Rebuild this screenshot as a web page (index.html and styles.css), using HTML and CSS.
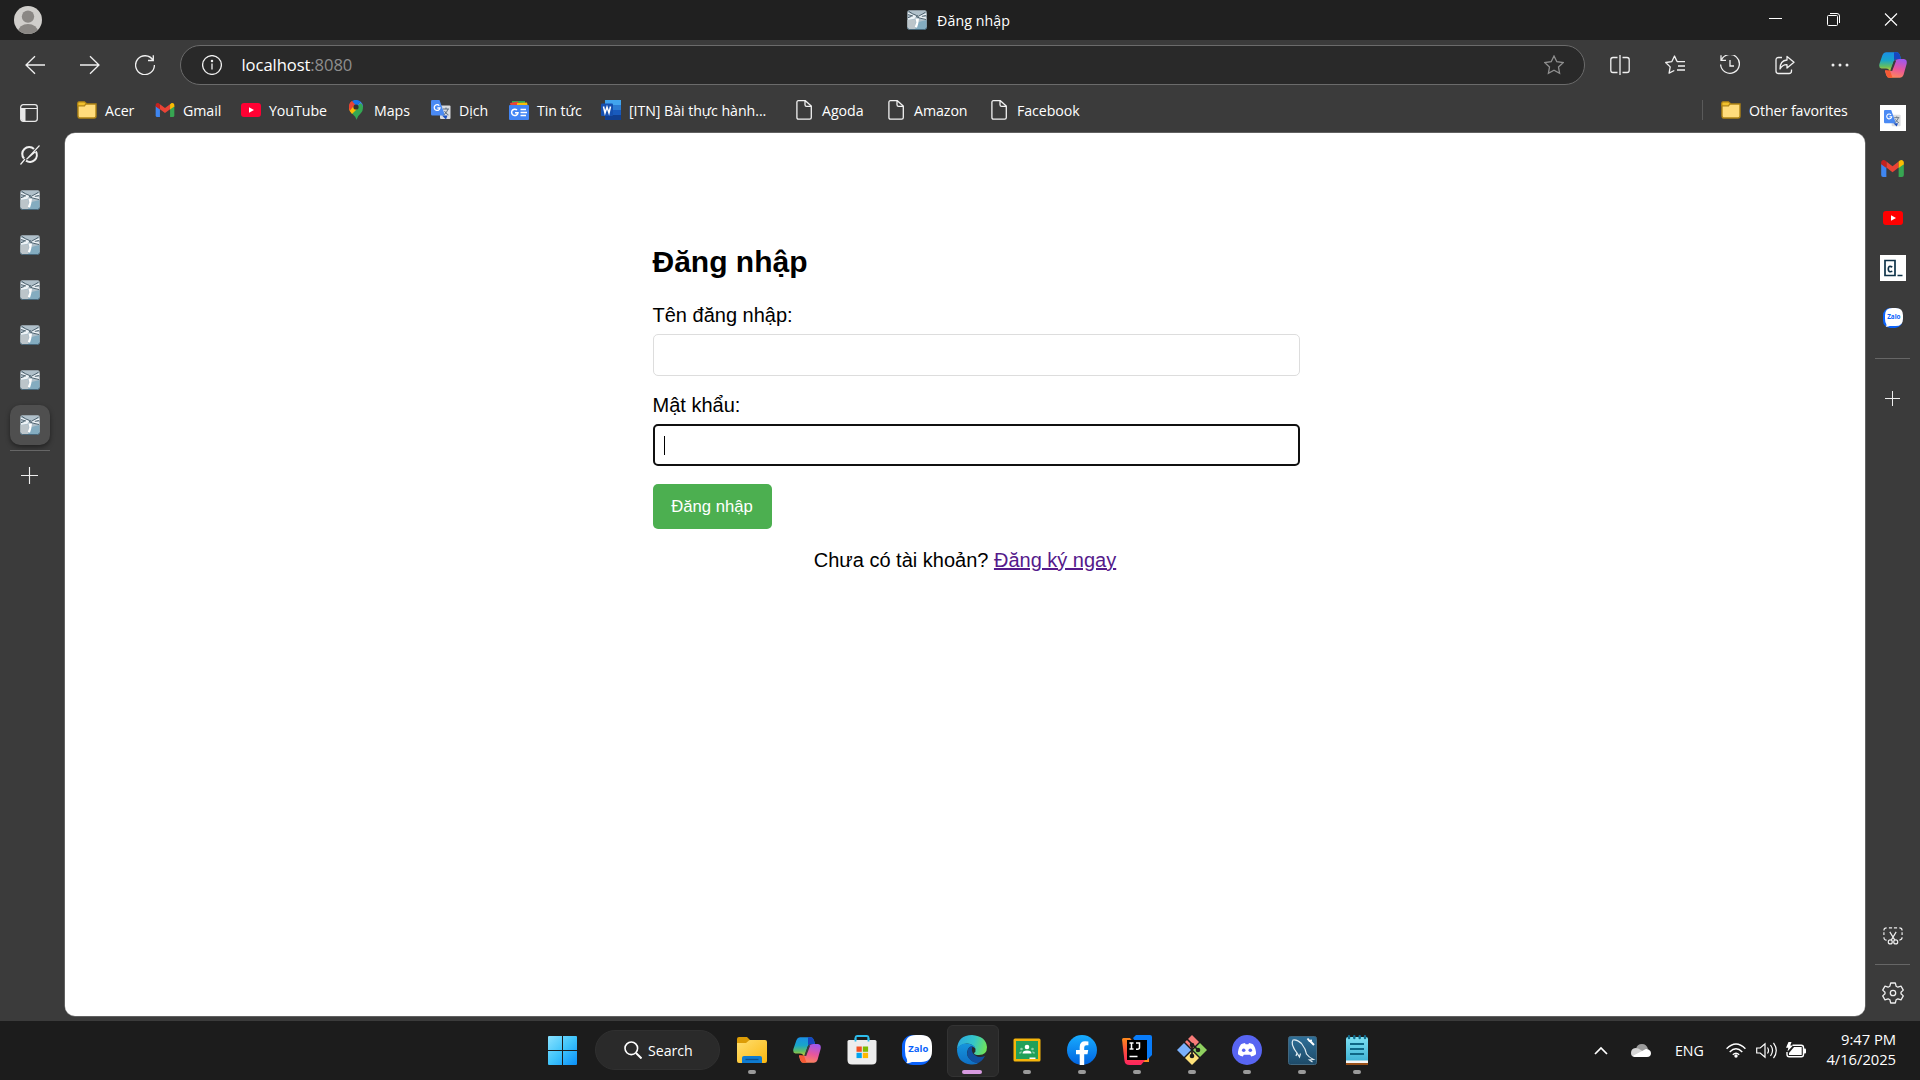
FILE: index.html
```html
<!DOCTYPE html>
<html lang="vi">
<head>
<meta charset="utf-8">
<title>Đăng nhập</title>
<link rel="stylesheet" href="styles.css">
</head>
<body>
<svg class="defs" width="0" height="0">
  <defs>
    <linearGradient id="cp1" x1="0" y1="0" x2="0" y2="1"><stop offset="0" stop-color="#1a8fe6"/><stop offset=".4" stop-color="#18a5c9"/><stop offset=".7" stop-color="#62bd62"/><stop offset="1" stop-color="#f5cf25"/></linearGradient>
    <linearGradient id="cp2" x1=".6" y1="0" x2=".3" y2="1"><stop offset="0" stop-color="#a257ea"/><stop offset=".5" stop-color="#e8569c"/><stop offset="1" stop-color="#ff8a55"/></linearGradient>
    <linearGradient id="win" x1="0" y1="0" x2="1" y2="1"><stop offset="0" stop-color="#8ae2ff"/><stop offset=".5" stop-color="#3fc4fb"/><stop offset="1" stop-color="#0a8ff8"/></linearGradient>
    <linearGradient id="fold" x1="0" y1="0" x2="1" y2="1"><stop offset="0" stop-color="#ffdf70"/><stop offset="1" stop-color="#fbb70f"/></linearGradient>
    <linearGradient id="edgeA" x1="0" y1=".3" x2="1" y2=".5"><stop offset="0" stop-color="#2aa9e0"/><stop offset=".55" stop-color="#35c6c8"/><stop offset="1" stop-color="#6fe35a"/></linearGradient>
    <linearGradient id="edgeB" x1="0" y1="0" x2="0" y2="1"><stop offset="0" stop-color="#1695dc"/><stop offset="1" stop-color="#0f6fc4"/></linearGradient>
    <linearGradient id="my" x1="0" y1="0" x2="0" y2="1"><stop offset="0" stop-color="#2f6f98"/><stop offset="1" stop-color="#1d4a68"/></linearGradient>
    <linearGradient id="np" x1="0" y1="0" x2="0" y2="1"><stop offset="0" stop-color="#7de0f2"/><stop offset="1" stop-color="#3bb0d4"/></linearGradient>
    <linearGradient id="ijA" x1="0" y1="0" x2="0" y2="1"><stop offset="0" stop-color="#ff8a1c"/><stop offset=".5" stop-color="#fd4a3f"/><stop offset="1" stop-color="#ff2560"/></linearGradient>
    <linearGradient id="fbg" x1="0" y1="0" x2="0" y2="1"><stop offset="0" stop-color="#18acfe"/><stop offset="1" stop-color="#0163e0"/></linearGradient>
  </defs>
  <symbol id="favicon" viewBox="0 0 20 20">
    <rect x=".3" y=".3" width="19.4" height="19.2" rx="1.8" fill="#b0c0ca"/>
    <path d="M.5 10h7.500v9.300H2q-1.500 0-1.500-1.300z" fill="#bcc5ca"/>
    <path d="M11.500 12l8-2v7.500q0 2-2 2H8z" fill="#84acc0"/>
    <path d="M1 2.800l8.500 2.700-2 3.200L1 9.800V7.500l4-1.300L1 5zM19.300 3.200l-8.300 2.500 2 2.800 6.300 1.300V7.500l-4-1 4-1.300z" fill="#edf3f7"/>
    <path d="M1.500 1.200q4 3 8 4.300l2 .7q4-2 7-4M1 7.700l3.500-1.300M9 6.500l3.500 1.500 6.500 1.500M1 4.600l5 1.400M18.800 5.500l-4 .9" stroke="#3d5260" stroke-width=".9" fill="none"/>
    <path d="M8.500 8.500l3.500.3-.8 5-1.200 4-2.200-1 1.600-4.300z" fill="#fff"/>
    <path d="M.5 17.500q0 2 2 2h15q2 0 2-2" stroke="#3b5d72" stroke-width=".8" fill="none"/>
  </symbol>
  <symbol id="folder" viewBox="0 0 20 18">
    <path d="M1 14.500V3h18v12q0 2-2 2H2.500Q1 17 1 14.500z" fill="#ffdc7c" stroke="#b08415" stroke-width="1.400"/>
    <path d="M.8 4.800V2Q.8.800 2 .800h5.500l1.700 1.500L7.500 4.800z" fill="#f0c02c" stroke="#b08415" stroke-width="1.200"/>
  </symbol>
  <symbol id="gmail" viewBox="0 0 24 18">
    <path d="M0 4l5.500 3.500V18H2Q0 18 0 16z" fill="#3f86f0"/><path d="M24 4l-5.500 3.500V18H22q2 0 2-2z" fill="#37a652"/>
    <path d="M5.500 8V1.500L12 6.500l6.500-5V8L12 13z" fill="#ea4335"/>
    <path d="M0 5V2.500C0 .5 2.500-.8 4.300.600L5.500 1.500V8.500L0 4.500z" fill="#c5221f"/><path d="M24 5V2.500C24 .5 21.500-.8 19.700.600L18.500 1.500V8.500L24 4.500z" fill="#fbbc04"/>
  </symbol>
  <symbol id="translate" viewBox="0 0 20 20">
    <rect x="9" y="5.500" width="10.500" height="13.500" rx="1" fill="#dadce0"/>
    <path d="M11 15.500l4 4 1.500-4z" fill="#1a4fc0"/>
    <path d="M1.300 0h7.200l5.500 15.500H1.300Q0 15.500 0 14V1.300Q0 0 1.300 0z" fill="#4a8af4"/>
    <path d="M8.300 5.600A2.900 2.900 0 1 0 9 8H6.300" stroke="#fff" stroke-width="1.300" fill="none"/>
    <path d="M12 9h6M15 7.500V9M17 9q-1 4-4.500 6M13.500 11q1 2.500 4 4" stroke="#5f6f80" stroke-width="1" fill="none"/>
  </symbol>
  <symbol id="youtube" viewBox="0 0 20 14"><rect width="20" height="14" rx="3" fill="currentColor"/><path d="M8 4.200v5.600L13 7z" fill="#fff"/></symbol>
  <symbol id="page" viewBox="0 0 20 20"><path d="M4.500.7h6.800L17.300 6v11.600q0 1.600-1.600 1.600H4.500q-1.600 0-1.600-1.600V2.300Q2.900.7 4.500.7zM11 .7v4q0 1.600 1.600 1.600h4.700" fill="none" stroke="#f2f2f2" stroke-width="1.300"/></symbol>
  <symbol id="copilot" viewBox="0 0 28 26">
    <path d="M7 .3h11q2 0 3 3.200l1 3.500h-4.500q-2 0-2.800 2.500l-3.500 11Q10.400 16.600 7 16.600H2.500Q-.5 16 .4 12L3.500 3Q4.500.3 7 .3z" fill="url(#cp1)"/>
    <path d="M15 .3h3q2 0 3 3.200l1 3.500h-4.500q-1.500 0-2.500 1.500z" fill="#1746c0"/>
    <path d="M21 25.700H10q-2 0-3-3.200L6 19h4.500q2 0 2.800-2.500l2.700-7.500Q17 7 20 7h5q3.500.6 2.600 5l-3.100 11q-1 2.700-3.500 2.700z" fill="url(#cp2)"/>
    <path d="M6 18l1.500 5.500Q8.300 25.700 10 25.700h3.500L11 18.500z" fill="#f65a35"/>
    <path d="M14.800 9.300l-3.600 9.400 2 .3 4-10.500z" fill="#3b3b3b"/>
  </symbol>
  <symbol id="zalo" viewBox="0 0 30 30">
    <rect width="29" height="30" rx="11" fill="#0a62fb"/><path d="M14 0h5q11 0 11 11v5q0 11-11 11H10q-2.500 1.500-6 1 1.800-1 1-3.500Q3 21 3 16v-5Q3 0 14 0z" fill="#fff"/>
  </symbol>
  <symbol id="plus" viewBox="0 0 18 18"><path d="M9 0v18M0 9h18" stroke="#eee" stroke-width="1.200"/></symbol>
</svg>

<header class="titlebar">
  <svg class="avatar" viewBox="0 0 28 28"><defs><clipPath id="av"><circle cx="14" cy="14" r="14"/></clipPath></defs><g clip-path="url(#av)"><rect width="28" height="28" fill="#d0cecb"/><circle cx="14" cy="10.600" r="6.200" fill="#8a8784"/><ellipse cx="14" cy="26" rx="10" ry="8" fill="#8a8784"/></g></svg>
  <div class="window-title"><svg width="20" height="20"><use href="#favicon"/></svg><span class="ui">Đăng nhập</span></div>
  <div class="window-controls">
    <svg width="57" height="40"><path d="M22 18.500h13" stroke="#fff"/></svg>
    <svg width="58" height="40"><rect x="23.500" y="15.500" width="10" height="10" rx="1" fill="none" stroke="#fff"/><path d="M26 13.500h7q2.500 0 2.500 2.500v7" fill="none" stroke="#fff"/></svg>
    <svg width="58" height="40"><path d="M23 13.500l12 12M35 13.500l-12 12" stroke="#fff" stroke-width="1.100"/></svg>
  </div>
</header>

<nav class="toolbar">
  <div class="nav-buttons">
    <svg viewBox="0 0 20 20"><path d="M20 10H.8M10 1.200L1 10l9 8.800"/></svg>
    <svg viewBox="0 0 20 20"><path d="M0 10h19.200M10 1.200l9 8.800-9 8.800"/></svg>
    <svg viewBox="0 0 20 20"><path d="M18 5.200A9.400 9.400 0 1 0 19.400 10M18.300.2v5.300H13"/></svg>
  </div>
  <div class="address">
    <svg class="info" viewBox="0 0 20 20"><circle cx="10" cy="10" r="9.400"/><path d="M10 8.500v6"/><circle cx="10" cy="6" r=".6" fill="#fff"/></svg>
    <div class="url"><span class="host">localhost</span><span class="port">:8080</span></div>
    <svg class="star" viewBox="0 0 20 20"><path d="M10 1l2.800 5.700 6.300.9-4.600 4.400 1.100 6.300L10 15.300l-5.600 3 1.100-6.300L.9 7.600l6.300-.9z"/></svg>
  </div>
  <div class="tools">
    <svg viewBox="0 0 20 20"><path d="M7.500 2.500H3Q.8 2.500.8 4.700v10.600q0 2.200 2.200 2.200h4.500M12.500 2.500H17q2.200 0 2.200 2.200v10.600q0 2.200-2.200 2.200h-4.500M10 0v20"/></svg>
    <svg viewBox="0 0 20 20"><path d="M11.500 5.500L9.500 1 6.900 6.600l-6.200.9 4.500 4.400-1.100 6.300 5.200-2.700M9.500 1l2.600 5.600H20M13 11h7M12 15h8" stroke-linejoin="round"/></svg>
    <svg viewBox="0 0 20 20"><path d="M1 .3v5h5M1.300 5.300A9.400 9.400 0 1 1 .6 9.500M10 5v6h4"/></svg>
    <svg viewBox="0 0 20 20"><path d="M7 2.500H3.500Q1 2.500 1 5v11q0 2.500 2.500 2.500H14q2.500 0 2.500-2.500v-1.500M12 1.500l7 5.800-7 5.700V9.700Q7.500 9.500 5 14q0-8.500 7-9z" stroke-linejoin="round"/></svg>
    <svg viewBox="0 0 20 20"><g fill="#eee" stroke="none"><circle cx="3" cy="10" r="1.500"/><circle cx="10" cy="10" r="1.500"/><circle cx="17" cy="10" r="1.500"/></g></svg>
  </div>
  <svg class="copilot-btn"><use href="#copilot"/></svg>
</nav>

<div class="browser">
  <aside class="tabs">
    <div class="slot short"><svg width="18" height="18" viewBox="0 0 18 18"><rect x=".7" y=".7" width="16.600" height="16.600" rx="2.500" fill="none" stroke="#e8e8e8" stroke-width="1.300"/><path d="M1 4.500h4.500V17H3q-2 0-2-2z" fill="#e8e8e8"/><path d="M1 4.500h16" stroke="#e8e8e8"/></svg></div>
    <div class="slot short"><svg width="20" height="20" viewBox="0 0 20 20"><path d="M15.800 6.400A6.900 6.900 0 0 1 6 15.700M4 13.500A6.900 6.900 0 0 1 14 4" fill="none" stroke="#f0f0f0" stroke-width="2.100"/><path d="M19.500.5L6.500 14.300 15 7M.5 19.500L5 14" fill="none" stroke="#f0f0f0" stroke-width="1.200"/></svg></div>
    <div class="slot"><svg width="20" height="20"><use href="#favicon"/></svg></div>
    <div class="slot"><svg width="20" height="20"><use href="#favicon"/></svg></div>
    <div class="slot"><svg width="20" height="20"><use href="#favicon"/></svg></div>
    <div class="slot"><svg width="20" height="20"><use href="#favicon"/></svg></div>
    <div class="slot"><svg width="20" height="20"><use href="#favicon"/></svg></div>
    <div class="slot"><div class="active-tab"><svg width="20" height="20"><use href="#favicon"/></svg></div></div>
    <div class="tab-divider"></div>
    <svg class="new-tab"><use href="#plus"/></svg>
  </aside>

  <div class="center">
    <div class="bookmarks ui">
      <div class="bm acer"><svg height="18"><use href="#folder"/></svg>Acer</div>
      <div class="bm gm"><svg height="14"><use href="#gmail"/></svg>Gmail</div>
      <div class="bm yt"><svg height="14" color="#ff0033"><use href="#youtube"/></svg>YouTube</div>
      <div class="bm mp"><svg height="20" viewBox="0 0 20 20"><path d="M3 7q0-4 3-6l4 5-5.500 6Q3 9.500 3 7z" fill="#ea4335"/><path d="M6 1q4-2.500 8.500.5L10 7z" fill="#1a73e8"/><path d="M14.500 1.500Q17 3.500 17 7l-7 0z" fill="#4285f4"/><path d="M4.300 11.500L15 3q4 5 0 10-4 3.500-4.500 6.800Q9.500 16.500 7 14.500z" fill="#34a853"/><path d="M3.100 8L8 5l3 4-5 5Q3 11 3.100 8z" fill="#fbbc04"/><path d="M3 7q0-4 3-6l3 3.500-5 6Q3 9 3 7z" fill="#ea4335"/><circle cx="10" cy="7" r="2.600" fill="#333"/></svg>Maps</div>
      <div class="bm tr"><svg height="20"><use href="#translate"/></svg>Dịch</div>
      <div class="bm nw"><svg height="20" viewBox="0 0 20 20"><path d="M3 1h13v6H3z" fill="#34a853"/><path d="M1 3l8-1.500L11 7H2z" fill="#ea4335"/><path d="M8 3l10-.5L19 7H8z" fill="#fbbc04"/><rect y="5" width="20" height="15" rx="1" fill="#4285f4"/><path d="M8 10a3.200 3.200 0 1 0 1 2.700H6M11.500 9.500H17M11.500 12.500h6.500M11.500 15.500H17" fill="none" stroke="#fff" stroke-width="1.500"/></svg>Tin tức</div>
      <div class="bm itn"><svg height="20" viewBox="0 0 20 20"><path d="M4 0h16v6H4z" fill="#41a5ee"/><path d="M4 5h16v5H4z" fill="#2b7cd3"/><path d="M4 10h16v5H4z" fill="#185abd"/><path d="M4 15h16v5H4z" fill="#103f91"/><rect y="3.500" width="12" height="12.500" rx="1" fill="#1550b0"/><path d="M2.500 6.500L4 13l2-6 2 6 1.500-6.500" fill="none" stroke="#fff" stroke-width="1.500"/></svg>[ITN] Bài thực hành...</div>
      <div class="bm ag"><svg height="20"><use href="#page"/></svg>Agoda</div>
      <div class="bm am"><svg height="20"><use href="#page"/></svg>Amazon</div>
      <div class="bm fb"><svg height="20"><use href="#page"/></svg>Facebook</div>
      <div class="bm other"><svg height="18"><use href="#folder"/></svg>Other favorites</div>
    </div>
    <main class="page">
      <form class="login">
        <h2>Đăng nhập</h2>
        <label>Tên đăng nhập:</label>
        <div class="field"></div>
        <label>Mật khẩu:</label>
        <div class="field focused"><span class="caret"></span></div>
        <button type="button">Đăng nhập</button>
        <p>Chưa có tài khoản? <a href="#">Đăng ký ngay</a></p>
      </form>
    </main>
  </div>

  <aside class="sidebar">
    <div class="side-slot"><div class="tile"><svg width="17" height="17"><use href="#translate"/></svg></div></div>
    <div class="side-slot"><svg width="23" height="17"><use href="#gmail"/></svg></div>
    <div class="side-slot"><svg width="20" height="14" color="#ff0000"><use href="#youtube"/></svg></div>
    <div class="side-slot"><div class="tile"><svg width="26" height="26" viewBox="0 0 26 26"><path d="M5 5.500h10v15H5zM17.500 20.500h5" fill="none" stroke="#10344a" stroke-width="1.700"/><path d="M12.300 12q-4-1.800-4 2t4 2.300" fill="none" stroke="#10344a" stroke-width="1.700"/></svg></div></div>
    <div class="side-slot"><svg width="20" height="20" viewBox="0 0 30 30"><use href="#zalo"/><text x="16.300" y="16.700" text-anchor="middle" class="zalo-text">Zalo</text></svg></div>
    <div class="side-divider"></div>
    <svg class="side-plus"><use href="#plus"/></svg>
    <svg class="snip" viewBox="0 0 22 20"><path d="M4 14.500Q1 14.500 1 11.500M1 9V6M1 4Q1 1 4 1M6.500 1h3.500M12 1h3.500M18 1q3 0 3 3M21 6v3M21 11.500q0 3-3 3M7.500 5.500l5.500 9M14.500 5.500L9 14.500"/><circle cx="8" cy="16.500" r="2.200"/><circle cx="14" cy="16.500" r="2.200"/></svg>
    <div class="side-divider low"></div>
    <svg class="gear" viewBox="0 0 22 22"><path d="M8.700 1h4.600l.8 3.200 1.800 1 3.100-1 2.300 3.900L19 10.300v1.400l2.300 2.200-2.300 3.900-3.100-1-1.800 1-.8 3.200H8.700l-.8-3.200-1.800-1-3.100 1L.7 13.900 3 11.700v-1.400L.7 8.100 3 4.200l3.100 1 1.800-1z" stroke-linejoin="round"/><circle cx="11" cy="11" r="2.700"/></svg>
  </aside>
</div>

<footer class="taskbar ui">
  <div class="apps">
    <div class="app"><svg width="29" height="29" viewBox="0 0 29 29"><path d="M1 0h13v14H0V1Q0 0 1 0zM15 0h13q1 0 1 1v13H15zM0 15h14v14H1q-1 0-1-1zM15 15h14v13q0 1-1 1H15z" fill="url(#win)"/></svg></div>
    <div class="search"><svg width="18" height="18" viewBox="0 0 18 18"><circle cx="7.300" cy="7.300" r="6.300" fill="none" stroke="#fff" stroke-width="1.600"/><path d="M12 12l5.500 5.500" stroke="#fff" stroke-width="2"/></svg>Search</div>
    <div class="app run"><svg width="30" height="27" viewBox="0 0 30 27"><path d="M0 2Q0 0 2 0h8l3 3-3 4H0z" fill="#dc9c06"/><path d="M9 6l3.500-3H28q2 0 2 2v19q0 2-2 2H2q-2 0-2-2V6z" fill="url(#fold)"/><path d="M5 26v-5q0-2 2-2h16q2 0 2 2v5z" fill="#0f7bd0"/><path d="M8.500 22.500h13" stroke="#0c4f8c" stroke-width="1.300"/></svg></div>
    <div class="app"><svg width="28" height="26"><use href="#copilot"/></svg></div>
    <div class="app"><svg width="30" height="30" viewBox="0 0 30 30"><path d="M8.500 6V3q0-2 2-2h9q2 0 2 2v3" fill="none" stroke="#2dbdec" stroke-width="1.800"/><path d="M.5 6.500Q.5 5 2 5h26q1.500 0 1.500 1.500V25q0 4.500-4.500 4.500H5Q.5 29.500.5 25z" fill="#ededed"/><path d="M8.500 3v3.500M21.500 3v3.500" stroke="#2dbdec" stroke-width="1.800"/><path d="M9.500 11.500h5.300v5.300H9.500z" fill="#f25022"/><path d="M15.800 11.500h5.300v5.300h-5.300z" fill="#7fba00"/><path d="M9.500 17.800h5.300v5.300H9.500z" fill="#00a4ef"/><path d="M15.800 17.800h5.300v5.300h-5.300z" fill="#ffb900"/></svg></div>
    <div class="app"><svg width="30" height="30" viewBox="0 0 30 30"><use href="#zalo"/><text x="16.300" y="16.700" text-anchor="middle" class="zalo-text">Zalo</text></svg></div>
    <div class="app run active"><svg width="30" height="30" viewBox="0 0 30 30"><path d="M0 14Q1 0 15 0q14 1 15 12 0 8-8 8-5 0-5-2 2-1 1.500-4Q17 9 10 8.500 3 9 0 14z" fill="url(#edgeA)"/><path d="M0 14Q3 8 10 8.500q7 .5 8.400 5Q14 9.500 11 14q-3 7 4 12 5 2.500 8 1-4 3-9 2.500Q0 28 0 14z" fill="url(#edgeB)"/><path d="M11 14q1.500-3 5-3-2 3-.5 6.500 4 6.500 12.500 3.500Q24 28.500 19 28 8 24 11 14z" fill="#114f9e"/></svg></div>
    <div class="app run"><svg width="28" height="24" viewBox="0 0 28 24"><rect x=".5" y=".5" width="27" height="23" rx="1.500" fill="#f5b50b"/><rect x="3" y="3" width="22" height="18" fill="#21a05a"/><circle cx="14" cy="9" r="2.300" fill="#fff"/><path d="M9.500 15.500q0-3 4.500-3t4.500 3z" fill="#fff"/><g fill="#8bd0a8"><circle cx="8.500" cy="11" r="1.300"/><circle cx="19.500" cy="11" r="1.300"/><path d="M6 15.500q0-2.500 3-2l-1 2zM22 15.500q0-2.500-3-2l1 2z"/></g><path d="M16.500 19.500h6V21h-6z" fill="#fff"/></svg></div>
    <div class="app run"><svg width="30" height="30" viewBox="0 0 30 30"><circle cx="15" cy="15" r="15" fill="url(#fbg)"/><path d="M12.700 30V19.300H9v-4.200h3.700V12q0-5.700 5.500-5.700 1.600 0 3.200.3v3.700h-2q-2.200 0-2.200 2.100v2.700h4l-.7 4.200h-3.300V30z" fill="#fff"/></svg></div>
    <div class="app run"><svg width="30" height="30" viewBox="0 0 30 30"><path d="M15 14h12v13H15z" fill="#fb8b1e"/><path d="M11 3l3-3h14q2 0 2 2v18l-5 5z" fill="#087cfa"/><path d="M0 4.500Q0 3 1.500 3H8l17 20-6 7H7.500Q3 30 2.500 26z" fill="url(#ijA)"/><rect x="5" y="5" width="20" height="20" fill="#000"/><path d="M7.500 8h4M9.500 8v6M7.500 14h4M14 8h3.500v4.500q0 1.700-2 1.700H14M7.500 21.500h8" fill="none" stroke="#fff" stroke-width="1.500"/></svg></div>
    <div class="app run"><svg width="30" height="30" viewBox="0 0 30 30"><path d="M15 0l7 7-7 7-7-7z" fill="#f77b78"/><path d="M23 8l7 7-7 7-7-7z" fill="#8fd05f"/><path d="M7 8l7 7-7 7-7-7z" fill="#7ab0fb"/><path d="M15 16l7 7-7 7-7-7z" fill="#ffe27a"/><path d="M10 4l5 5v13M15 9l6 6" fill="none" stroke="#1c1c1c" stroke-width="1.700"/><g fill="#1c1c1c"><circle cx="15" cy="10" r="2.300"/><circle cx="15" cy="21" r="2.300"/><circle cx="21" cy="15" r="2.300"/></g></svg></div>
    <div class="app run"><svg width="30" height="30" viewBox="0 0 30 30"><circle cx="15" cy="15" r="15" fill="#5865f2"/><path d="M9 9.300q2-1 4-1.300l.6 1.200h2.800L17 8q2 .3 4 1.300 3.300 4.700 3 10-2 1.700-4.800 2.300l-1-1.900h-6.400l-1 1.900Q8 21 6 19.300q-.3-5.300 3-10z" fill="#fff"/><circle cx="11.700" cy="15.300" r="1.800" fill="#5865f2"/><circle cx="18.300" cy="15.300" r="1.800" fill="#5865f2"/></svg></div>
    <div class="app run"><svg width="29" height="29" viewBox="0 0 29 29"><rect x=".5" y=".5" width="28" height="28" rx="2" fill="url(#my)" stroke="#41677f"/><path d="M8 20l1-3Q2 8 5 4q4-1 8.500 3.500 4 5 5 10.500 2 3 7 5.500l-4 .5 3 2M9 17l2.500 4 1-3.500" fill="none" stroke="#e3edf2" stroke-width="1.200"/><path d="M19.500 2.500l2 2.500 2.500-.5M21.500 4.500L26 9" stroke="#fff" stroke-width="2" fill="none"/></svg></div>
    <div class="app run"><svg width="24" height="30" viewBox="0 0 24 30"><path d="M1 4q0-2 2-2h18q2 0 2 2v24H1z" fill="url(#np)"/><path d="M1 25.500h22V28H1z" fill="#f5f5f5"/><path d="M1 28h22v2H1z" fill="#9a5018"/><path d="M4 1.200V3M9.300 1.200V3M14.700 1.200V3M20 1.200V3" stroke="#126d8e" stroke-width="2.400" stroke-linecap="round"/><path d="M5 9h14M5 14h14M5 19h14" stroke="#0f6786" stroke-width="1.800"/></svg></div>
  </div>
  <div class="tray">
    <svg class="chev" width="14" height="9" viewBox="0 0 14 9"><path d="M1 8l6-6 6 6" fill="none" stroke="#fff" stroke-width="1.700"/></svg>
    <svg class="cloud" width="20" height="13" viewBox="0 0 20 13"><path d="M5 5q1-5 6-5 4.500 0 6 5l-6 3z" fill="#9c9c9c"/><path d="M0 9q0-4.500 4.500-5 3 0 4.500 1.500l6 4-5 3.500H4q-4 0-4-4z" fill="#d5d5d5"/><path d="M2 11.800L13 6q2-1.500 4.500-.5Q20 6.500 20 9q0 4-4 4H4q-1 0-2-1.200z" fill="#fff"/></svg>
    <span class="lang">ENG</span>
    <svg class="wifi" width="20" height="15" viewBox="0 0 20 15"><path d="M.6 5.800q9.400-9.600 18.800 0M3.700 8.900q6.300-6.300 12.600 0M6.800 11.700q3.200-3 6.400 0" fill="none" stroke="#fff" stroke-width="1.400"/><circle cx="10" cy="13" r="1.700" fill="#fff"/></svg>
    <svg class="sound" width="21" height="17" viewBox="0 0 21 17"><path d="M.7 6h3.500L9 1.800v13.400L4.200 11H.7zM11.500 5.500q2 3 0 6M14.500 3q4 5.500 0 11M17.500.8q5.500 7.700 0 15.400" fill="none" stroke="#fff" stroke-width="1.200"/></svg>
    <svg class="batt" width="20" height="16" viewBox="0 0 20 16"><path d="M6.500 3.200h8.800q2.200 0 2.200 2.200v7.200q0 2.200-2.200 2.200H3.200Q1 14.800 1 12.600V10" fill="none" stroke="#fff" stroke-width="1.400"/><path d="M8 5h7.700v8H3v-2z" fill="#fff"/><path d="M18 6.500h1q1 0 1 1v3q0 1-1 1h-1z" fill="#fff"/><path d="M2.500 0h3L4.300 3.500H7L1.500 9.500 2.300 5.800H0z" fill="#fff"/></svg>
    <div class="clock"><span>9:47 PM</span><span>4/16/2025</span></div>
  </div>
</footer>
</body>
</html>
```
FILE: styles.css
```css
* { box-sizing: border-box; }
body { margin: 0; width: 1920px; height: 1080px; overflow: hidden; display: flex; flex-direction: column; background: #3b3b3b; color: #fff; font-family: "Open Sans", "Noto Sans", sans-serif; }
svg { display: block; flex: none; }
.defs { position: absolute; }
.ui { font-size: 14.2px; letter-spacing: -0.06px; white-space: nowrap; }
.zalo-text { font: bold 9.5px "Open Sans", sans-serif; letter-spacing: 0; fill: #0a62fb; }

.titlebar { height: 40px; background: #202020; display: grid; grid-template-columns: 1fr auto 1fr; align-items: center; flex: none; }
.avatar { width: 28px; height: 28px; margin-left: 14px; }
.window-title { display: flex; align-items: center; gap: 10px; width: 106px; }
.window-title .ui { letter-spacing: 0.1px; }
.window-controls { display: flex; justify-content: flex-end; }

.toolbar { height: 50px; flex: none; display: flex; align-items: center; }
.nav-buttons { display: flex; width: 180px; gap: 35px; padding-left: 25px; }
.toolbar svg { width: 20px; height: 20px; fill: none; stroke: #f0f0f0; stroke-width: 1.3; }
.address { width: 1405px; height: 40px; border: 1px solid #6b6b6b; border-radius: 20px; background: #292929; display: flex; align-items: center; padding: 0 20px 0 21px; }
.toolbar .star { stroke: #8f8f8f; margin-left: auto; }
.url { margin-left: 19.5px; padding-bottom: 1px; font-size: 16.6px; letter-spacing: -0.08px; }
.port { color: #8e8e8e; }
.tools { display: flex; gap: 35px; margin-left: 24.5px; }
.toolbar .copilot-btn { width: 28px; height: 26px; stroke: none; margin-left: 29.5px; }

.browser { flex: 1; min-height: 0; padding-top: 2px; display: grid; grid-template-columns: 64.5px 1fr 55px; }
.tabs { display: flex; flex-direction: column; }
.slot { height: 45px; width: 60px; display: flex; align-items: center; justify-content: center; flex: none; }
.slot.short { height: 42px; width: 58px; }
.slot.short + .slot.short { width: 60px; height: 43px; padding-bottom: 1px; }
.active-tab { width: 40px; height: 40px; border-radius: 10px; background: #4f4f4f; box-shadow: 0 2px 5px rgba(0, 0, 0, .45); display: flex; align-items: center; justify-content: center; }
.tab-divider { width: 40px; height: 1px; margin: 3px 0 0 10px; background: #666; }
.new-tab { width: 17px; height: 17px; margin: 16px 0 0 21px; }

.center { display: flex; flex-direction: column; min-width: 0; padding-bottom: 5px; }
.bookmarks { height: 41px; flex: none; display: flex; align-items: center; padding: 0 17px 5px 12.5px; }
.bm { display: flex; align-items: center; gap: 8px; flex: none; }
.bm svg { width: 20px; }
.acer { width: 78px; }
.gm { width: 86px; }
.yt { width: 105px; }
.mp { width: 85px; }
.tr { width: 78px; }
.nw { width: 92px; }
.itn { width: 193px; }
.ag { width: 92px; }
.am { width: 103px; }
.other { margin-left: auto; height: 20px; width: 146px; padding-left: 18px; border-left: 1px solid #5a5a5a; }

.page { flex: 1; background: #fff; border-radius: 10px; color: #000; font-family: "Liberation Sans", Arial, sans-serif; font-size: 20px; box-shadow: 0 0 0 .5px #888; }
.login { width: 625px; margin-left: 588px; padding-top: 111px; display: flex; flex-direction: column; }
.login h2 { margin: 0 0 25px; font-size: 30px; line-height: 35px; }
.login label { line-height: 23px; margin-bottom: 7px; }
.field { width: 647.5px; height: 42px; border: 1px solid #ddd; border-radius: 5px; margin-bottom: 18px; display: flex; align-items: center; padding-left: 10px; }
.focused { border: 2px solid #101010; padding-left: 9px; }
.caret { width: 1px; height: 19px; background: #000; }
.login button { align-self: flex-start; width: 119px; height: 45px; border: 0; border-radius: 5px; background: #4caf50; color: #fff; font: 16.67px "Liberation Sans", Arial, sans-serif; padding: 0; }
.login p { margin: 20px 0 0; line-height: 23px; text-align: center; }
.login a { color: #551a8b; }

.sidebar { display: flex; flex-direction: column; align-items: center; padding-top: 1px; }
.side-slot { height: 50px; display: flex; align-items: center; flex: none; }
.tile { width: 26px; height: 26px; background: #fff; display: flex; align-items: center; justify-content: center; }
.side-divider { width: 35px; height: 1px; background: #666; margin-top: 15px; flex: none; }
.side-plus { width: 15px; height: 15px; margin-top: 32px; }
.snip, .gear { fill: none; stroke: #eee; stroke-width: 1.3; width: 20px; height: 20px; }
.snip { margin-top: auto; }
.low { margin-top: 18px; }
.gear { width: 22px; height: 22px; margin: 17px 0 17px; }

.taskbar { height: 59px; flex: none; background: #1c1c1c; display: flex; align-items: center; padding: 0 24px 1px 534.5px; }
.apps, .tray { display: flex; align-items: center; height: 58px; }
.app { width: 55px; height: 58px; position: relative; display: flex; align-items: center; justify-content: center; }
.app.run::after { content: ""; position: absolute; left: 23.500px; bottom: 5px; width: 8px; height: 4px; border-radius: 2px; background: #9a9a9a; }
.app.active::before { content: ""; position: absolute; left: 2.5px; top: 4px; width: 50px; height: 50px; background: #292929; border: 1px solid #333; border-radius: 6px; }
.app.active svg { position: relative; }
.app.active::after { width: 20px; left: 17.5px; background: #d79ae0; }
.search { width: 125px; height: 40px; border-radius: 20px; background: #2a2a2a; border: 1px solid #303030; margin: 0 4.5px 0 5.5px; display: flex; align-items: center; gap: 6px; padding-left: 28px; }
.tray { margin-left: auto; }
.cloud { margin-left: 23px; }
.lang { margin-left: 24px; width: 29px; }
.wifi { margin-left: 22px; }
.sound { margin-left: 10px; }
.batt { margin-left: 9px; }
.clock { width: 90px; display: flex; flex-direction: column; text-align: right; line-height: 20px; font-size: 14.8px; padding-bottom: 2px; }
```
